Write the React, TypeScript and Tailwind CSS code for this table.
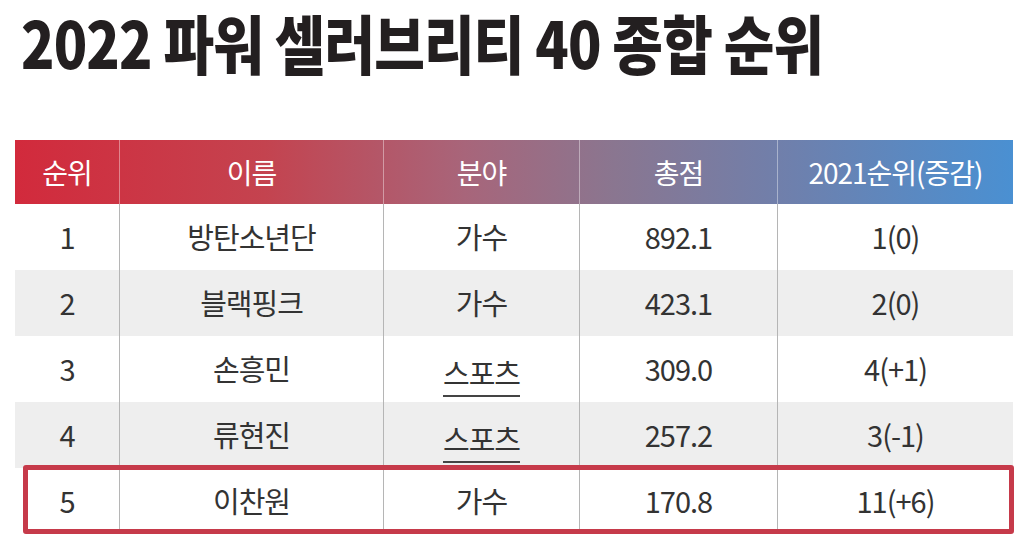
const rows = [
  { rank: '1', name: '방탄소년단', field: '가수', score: '892.1', prev: '1(0)' },
  { rank: '2', name: '블랙핑크', field: '가수', score: '423.1', prev: '2(0)' },
  { rank: '3', name: '손흥민', field: '스포츠', score: '309.0', prev: '4(+1)' },
  { rank: '4', name: '류현진', field: '스포츠', score: '257.2', prev: '3(-1)' },
  { rank: '5', name: '이찬원', field: '가수', score: '170.8', prev: '11(+6)' },
]

const cols = 'grid grid-cols-[105px_264px_196px_198px_235px]'

export default function App() {
  return (
    <div
      className="w-[1024px] h-[537px] bg-white overflow-hidden"
      style={{ fontFamily: '"Noto Sans CJK KR", "Noto Sans", sans-serif' }}
    >
      {/* title */}
      <div className="pt-[9px] pl-[21px] h-[140px]">
        <h1 className="inline-block w-max text-[64px] leading-[64px] font-black text-[#231f20] tracking-[-1px] whitespace-nowrap origin-left scale-x-[0.86]">
          2022 파워 셀러브리티 40 종합 순위
        </h1>
      </div>

      <div className="ml-[15px] w-[998px]">
        {/* header */}
        <div className={`${cols} h-[64px] text-white text-[28px] bg-[linear-gradient(90deg,#d22a3c_0%,#c4434f_25%,#a8657a_45%,#8a7690_60%,#6e80ad_78%,#4a90d2_100%)]`}>
          {['순위', '이름', '분야', '총점', '2021순위(증감)'].map((h, i) => (
            <div
              key={h}
              className={`flex items-center justify-center tracking-[-1px] ${i < 4 ? 'border-r border-white/40' : ''}`}
            >
              {h}
            </div>
          ))}
        </div>

        {/* body */}
        {rows.map((r, idx) => (
          <div
            key={r.rank}
            className={`relative ${cols} h-[66px] text-[29px] text-[#333] ${idx % 2 === 1 ? 'bg-[#eeeeee]' : 'bg-white'}`}
          >
            {[r.rank, r.name, r.field, r.score, r.prev].map((v, i) => (
              <div
                key={i}
                className={`flex items-center justify-center tracking-[-1px] ${i < 4 ? 'border-r border-[#b5b5b5]' : ''}`}
              >
                <span className={i === 2 && r.field === '스포츠' ? 'border-b-2 border-[#444] leading-[32px] pb-[7px] mt-[14px]' : ''}>{v}</span>
              </div>
            ))}
            {idx === 4 && (
              <div className="absolute top-[-3px] left-[8px] right-[-1px] bottom-[0px] border-[5px] border-[#c63a4a] rounded-[3px]" />
            )}
          </div>
        ))}
      </div>
    </div>
  )
}
